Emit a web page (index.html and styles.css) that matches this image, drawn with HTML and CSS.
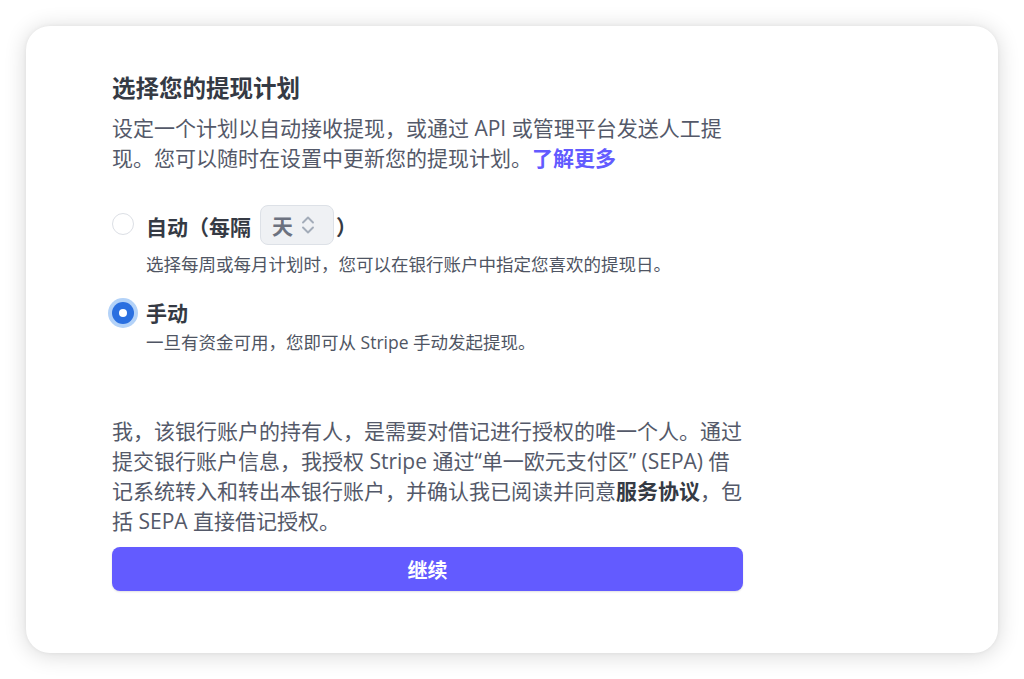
FILE: index.html
```html
<!DOCTYPE html>
<html lang="zh-CN">
<head>
<meta charset="utf-8">
<title>选择您的提现计划</title>
<link rel="stylesheet" href="styles.css">
</head>
<body>
<div class="card">
  <div class="content">
    <h1 class="title">选择您的提现计划</h1>
    <p class="desc">设定一个计划以自动接收提现，或通过 API 或管理平台发送人工提现。您可以随时在设置中更新您的提现计划。<a class="link" href="#">了解更多</a></p>

    <div class="options">
      <div class="option">
        <div class="option-head">
          <span class="radio"></span>
          <span class="label">自动（每隔</span>
          <span class="select">天
            <svg class="chev" width="16" height="22" viewBox="0 0 16 22" fill="none" stroke="#a3acb9" stroke-width="1.9" stroke-linecap="round" stroke-linejoin="round"><path d="M3 8.5 8 3.5l5 5"/><path d="M3 13.5 8 18.5l5-5"/></svg>
          </span>
          <span class="label paren">）</span>
        </div>
        <p class="hint">选择每周或每月计划时，您可以在银行账户中指定您喜欢的提现日。</p>
      </div>

      <div class="option option-second">
        <div class="option-head">
          <span class="radio radio-on"></span>
          <span class="label">手动</span>
        </div>
        <p class="hint hint-tight">一旦有资金可用，您即可从 Stripe 手动发起提现。</p>
      </div>
    </div>

    <p class="mandate">我，该银行账户的持有人，是需要对借记进行授权的唯一个人。通过提交银行账户信息，我授权 Stripe 通过“单一欧元支付区” (SEPA) 借记系统转入和转出本银行账户，并确认我已阅读并同意<strong>服务协议</strong>，包括 SEPA 直接借记授权。</p>

    <button class="btn" type="button">继续</button>
  </div>
</div>
</body>
</html>
```

FILE: styles.css
```css
* { box-sizing: border-box; }

html, body {
  margin: 0;
  padding: 0;
  background: #ffffff;
}

body {
  width: 1024px;
  height: 679px;
  overflow: hidden;
  font-family: "Open Sans", "Noto Sans CJK SC", sans-serif;
  color: #4f5563;
  padding: 26px;
}

.card {
  width: 972px;
  height: 627px;
  background: #ffffff;
  border-radius: 24px;
  box-shadow: 0 2px 22px rgba(0, 0, 0, 0.16), 0 0 4px rgba(0, 0, 0, 0.05);
  padding: 46px 0 0 86px;
}

.content {
  width: 632px;
  display: flex;
  flex-direction: column;
}

.title {
  margin: 0;
  font-size: 23.5px;
  line-height: 32px;
  font-weight: 700;
  color: #353a44;
}

.desc {
  margin: 9px 0 0;
  width: 616px;
  font-size: 21px;
  line-height: 30px;
  color: #545969;
}

.link {
  color: #635bff;
  font-weight: 700;
  text-decoration: none;
}

.options {
  margin-top: 32px;
  display: flex;
  flex-direction: column;
}

.option-head {
  display: flex;
  align-items: center;
  height: 40px;
}

.option-second {
  margin-top: 22px;
}

.option-second .option-head {
  height: 30px;
}

.radio {
  width: 22px;
  height: 22px;
  border-radius: 50%;
  border: 1.5px solid #dcdfe5;
  background: #fff;
  margin-right: 12px;
  flex: none;
  position: relative;
  top: -1px;
}

.radio-on {
  border: none;
  background: #2a6fe0;
  box-shadow: 0 0 0 4px #b3d2f8;
  top: 0;
}

.radio-on::after {
  content: "";
  position: absolute;
  left: 7px;
  top: 7px;
  width: 8px;
  height: 8px;
  border-radius: 50%;
  background: #ffffff;
}

.label {
  font-size: 21px;
  font-weight: 700;
  line-height: 30px;
  color: #353a44;
  position: relative;
  top: 2px;
}

.option-second .label {
  top: 0;
}

.select {
  display: inline-flex;
  align-items: center;
  gap: 7px;
  height: 40px;
  width: 74px;
  margin-left: 9px;
  padding-left: 11px;
  border: 1px solid #dde1e7;
  border-radius: 8px;
  background: #eff1f4;
  font-size: 21px;
  font-weight: 700;
  color: #6c7280;
}

.chev {
  flex: none;
}

.paren {
  margin-left: 2px;
}

.hint {
  margin: 7px 0 0 34px;
  font-size: 17.5px;
  line-height: 24px;
  color: #4f5563;
}

.hint-tight {
  margin-top: 2px;
}

.mandate {
  margin: 62px 0 0;
  font-size: 21px;
  line-height: 30px;
  color: #545969;
}

.mandate strong {
  color: #353a44;
  font-weight: 700;
}

.btn {
  margin-top: 11px;
  width: 631px;
  height: 44px;
  border: none;
  border-radius: 8px;
  background: #635bff;
  color: #ffffff;
  font-family: inherit;
  font-size: 20px;
  font-weight: 700;
  box-shadow: 0 1px 2px rgba(0, 0, 0, 0.12);
}
```
